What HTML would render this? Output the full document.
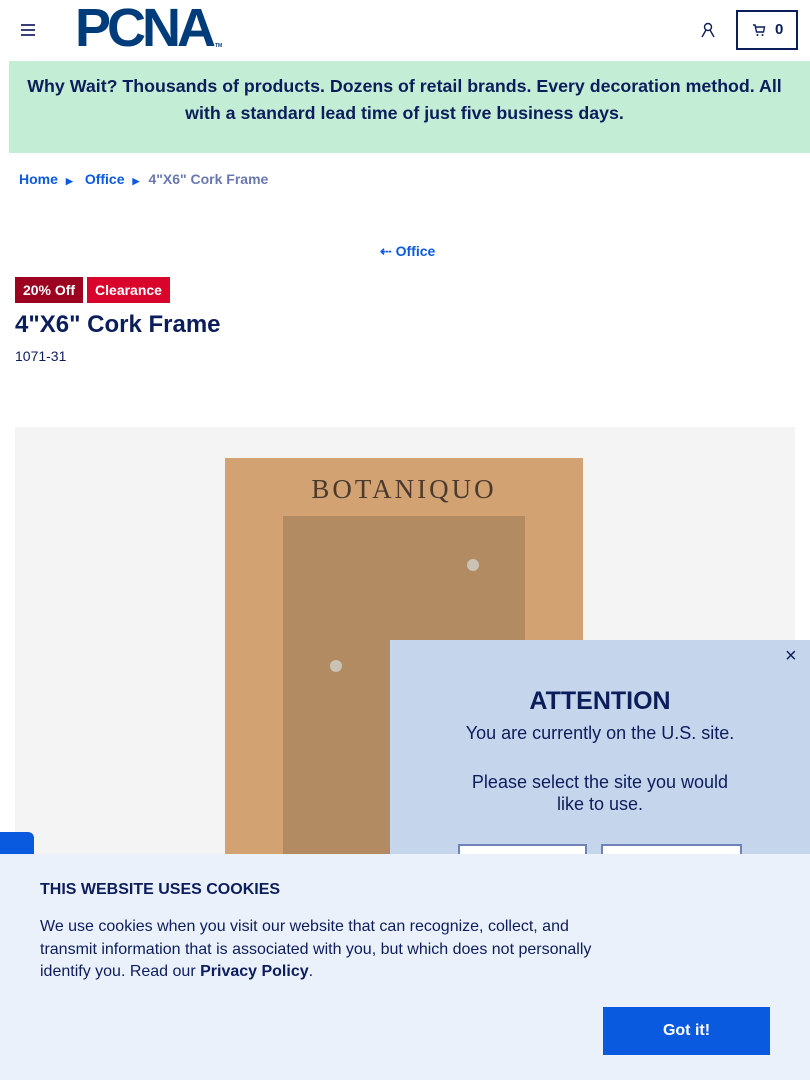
<!DOCTYPE html>
<html><head><meta charset="utf-8"><style>
*{margin:0;padding:0;box-sizing:border-box}
body{width:810px;height:1080px;overflow:hidden;position:relative;background:#fff;font-family:"Liberation Sans",Arial,sans-serif;color:#0c1d5c}
.abs{position:absolute}
</style></head><body>
<!-- header -->
<div class="abs" style="left:21px;top:24px;width:14px;height:2px;background:#3a3f7a;box-shadow:0 5px 0 #3a3f7a,0 10px 0 #3a3f7a"></div>
<div class="abs" style="left:75px;top:1px;font:900 54px/54px 'Liberation Sans',sans-serif;color:#003b7a;letter-spacing:-4px">PCNA</div>
<div class="abs" style="left:215px;top:43px;font:bold 5px sans-serif;color:#003b7a">TM</div>
<svg class="abs" style="left:700px;top:22px" width="16" height="16" viewBox="0 0 16 16"><circle cx="8" cy="5" r="3.5" fill="none" stroke="#0c1d5c" stroke-width="1.4"/><path d="M2 15 L6 8 M14 15 L10 8" stroke="#0c1d5c" stroke-width="1.4" fill="none"/></svg>
<div class="abs" style="left:736px;top:10px;width:62px;height:40px;border:2px solid #0c1d5c"></div>
<svg class="abs" style="left:752px;top:23px" width="14" height="14" viewBox="0 0 14 14"><path d="M1 2h2l1.5 7h7l1-5H4" fill="none" stroke="#0c1d5c" stroke-width="1.4"/><circle cx="5.5" cy="12" r="1" fill="#0c1d5c"/><circle cx="10.5" cy="12" r="1" fill="#0c1d5c"/></svg>
<div class="abs" style="left:775px;top:21px;font:bold 15px/18px 'Liberation Sans';color:#0c1d5c">0</div>
<!-- banner -->
<div class="abs" style="left:9px;top:61px;width:801px;height:92px;background:#c3eed5;text-align:center;font:bold 17.8px/27px 'Liberation Sans';color:#0c1d5c;padding:12px 10px 0 0">Why Wait? Thousands of products. Dozens of retail brands. Every decoration method. All with a standard lead time of just five business days.</div>
<!-- breadcrumb -->
<div class="abs" style="left:19px;top:171px;font:bold 14px/16px 'Liberation Sans';color:#0a5ae0;white-space:nowrap">Home<span style="font-size:9px;margin:0 12px 0 8px">▶</span>Office<span style="font-size:9px;margin:0 9px 0 8px">▶</span><span style="color:#6a78b2">4"X6" Cork Frame</span></div>
<div class="abs" style="left:380px;top:243px;font:bold 14px/16px 'Liberation Sans';color:#0a5ae0">⇠ Office</div>
<div class="abs" style="left:15px;top:277px;width:68px;height:26px;background:#9c0320;color:#fff;font:bold 14px/26px 'Liberation Sans';text-align:center">20% Off</div>
<div class="abs" style="left:87px;top:277px;width:83px;height:26px;background:#d9042c;color:#fff;font:bold 14px/26px 'Liberation Sans';text-align:center">Clearance</div>
<div class="abs" style="left:15px;top:309px;font:bold 24px/32px 'Liberation Sans';color:#0c1d5c">4"X6" Cork Frame</div>
<div class="abs" style="left:15px;top:348px;font:14px/16px 'Liberation Sans';color:#0c1d5c">1071-31</div>
<!-- image -->
<div class="abs" style="left:15px;top:427px;width:780px;height:460px;background:#f4f4f4"></div>
<div class="abs" style="left:225px;top:458px;width:358px;height:430px;background:#d2a272"></div>
<div class="abs" style="left:283px;top:516px;width:242px;height:380px;background:#b38b62"></div>
<div class="abs" style="left:225px;top:474px;width:358px;text-align:center;font:27px 'Liberation Serif',serif;letter-spacing:3px;color:#4a3b2e">BOTANIQUO</div>
<div class="abs" style="left:467px;top:559px;width:12px;height:12px;border-radius:50%;background:#c9c2b5"></div>
<div class="abs" style="left:330px;top:660px;width:12px;height:12px;border-radius:50%;background:#c9c2b5"></div>
<!-- popup -->
<div class="abs" style="left:390px;top:640px;width:420px;height:240px;background:#c5d5ec"></div>
<div class="abs" style="left:785px;top:645px;font:20px 'Liberation Sans';color:#0c1d5c">×</div>
<div class="abs" style="left:390px;top:686px;width:420px;text-align:center;font:bold 25px/30px 'Liberation Sans';color:#0c1d5c">ATTENTION</div>
<div class="abs" style="left:390px;top:722px;width:420px;text-align:center;font:18px/22px 'Liberation Sans';color:#0c1d5c">You are currently on the U.S. site.</div>
<div class="abs" style="left:460px;top:771px;width:280px;text-align:center;font:18px/22px 'Liberation Sans';color:#0c1d5c">Please select the site you would like to use.</div>
<div class="abs" style="left:458px;top:844px;width:129px;height:30px;background:#fff;border:2px solid #6f83b8"></div>
<div class="abs" style="left:601px;top:844px;width:141px;height:30px;background:#fff;border:2px solid #6f83b8"></div>
<div class="abs" style="left:0;top:832px;width:34px;height:30px;background:#0a5ae0;border-radius:0 6px 0 0"></div>
<!-- cookies -->
<div class="abs" style="left:0;top:854px;width:810px;height:226px;background:#ebf1fa"></div>
<div class="abs" style="left:40px;top:880px;font:bold 16px/20px 'Liberation Sans';color:#0c1d5c">THIS WEBSITE USES COOKIES</div>
<div class="abs" style="left:40px;top:916px;width:570px;font:16px/22.5px 'Liberation Sans';color:#0c1d5c">We use cookies when you visit our website that can recognize, collect, and transmit information that is associated with you, but which does not personally identify you. Read our <b>Privacy Policy</b>.</div>
<div class="abs" style="left:603px;top:1007px;width:167px;height:48px;background:#0a5ae0;color:#fff;font:bold 16px/48px 'Liberation Sans';text-align:center">Got it!</div>
</body></html>
